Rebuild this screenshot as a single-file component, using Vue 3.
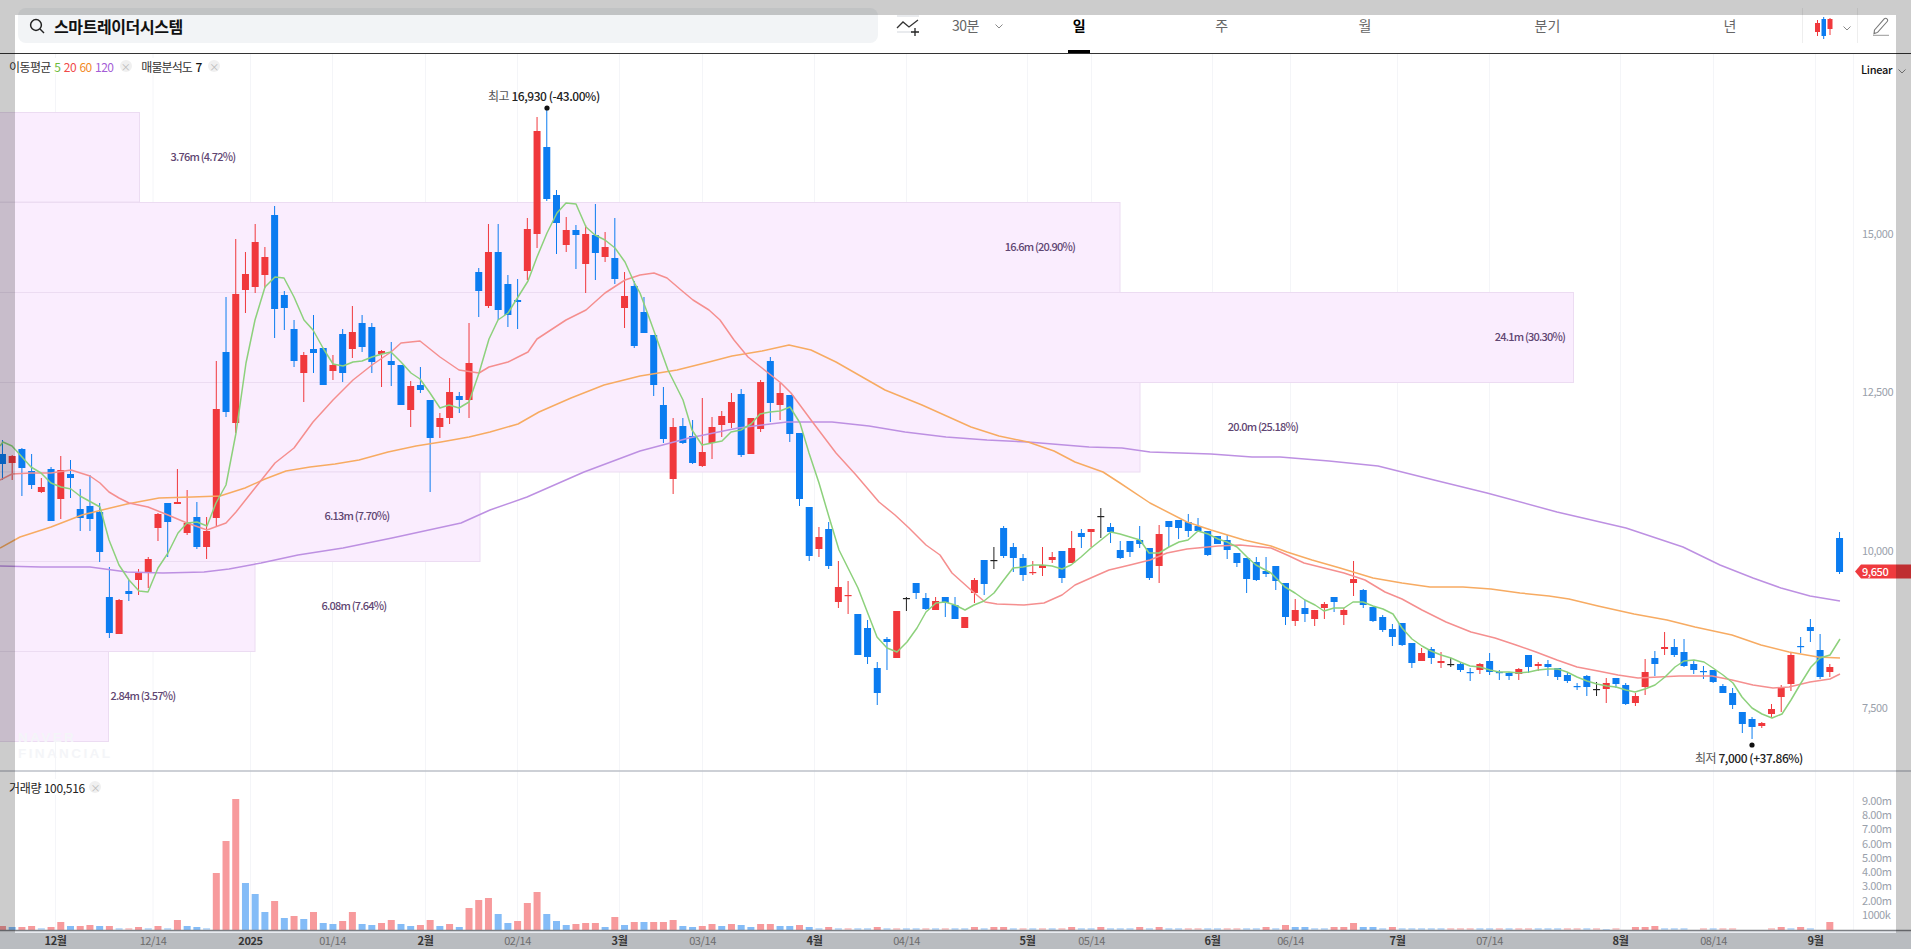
<template>
  <div class="page">
    <header class="header">
      <div class="search">
        <svg class="search-icon" width="16" height="16" viewBox="0 0 16 16">
          <circle cx="7" cy="7" r="5.4" fill="none" stroke="#222" stroke-width="1.5" />
          <path d="M11 11l4 4" stroke="#222" stroke-width="1.5" fill="none" />
        </svg>
        <span class="search-name">스마트레이더시스템</span>
      </div>
      <div class="line-tool">
        <svg width="24" height="22" viewBox="0 0 24 22">
          <path d="M1 1h22M1 17h15" stroke="#d3d7de" stroke-width="1.2" fill="none" />
          <path d="M1 13l6-6 6 5 9-7" stroke="#333" stroke-width="1.3" fill="none" />
          <path d="M15 17h8M19 13v8" stroke="#222" stroke-width="1.3" fill="none" />
        </svg>
      </div>
      <div class="interval">
        <span>30분</span>
        <svg class="chev" width="8" height="5" viewBox="0 0 8 5"><path d="M.5.5L4 4 7.5.5" /></svg>
      </div>
      <nav class="tabs">
        <a
          v-for="t in tabs"
          :key="t.label"
          class="tab"
          :class="{ active: t.active }"
          :style="{ width: t.w + 'px' }"
        >{{ t.label }}</a>
      </nav>
      <div class="type-cell">
        <svg width="20" height="22" viewBox="0 0 20 22">
          <path d="M3.5 3v16M16 1v17" stroke="#f0383c" fill="none" />
          <rect x="1" y="6" width="5" height="9" fill="#f0383c" />
          <rect x="13.5" y="2" width="5" height="10" fill="#f0383c" />
          <path d="M9.7 0v22" stroke="#0b7cf0" fill="none" />
          <rect x="7.5" y="2" width="4.5" height="17" fill="#0b7cf0" />
        </svg>
        <svg class="chev" width="8" height="5" viewBox="0 0 8 5"><path d="M.5.5L4 4 7.5.5" /></svg>
      </div>
      <div class="pencil">
        <svg width="17" height="19" viewBox="0 0 17 19">
          <path d="M1.5 13l9.7-11.2a1.9 1.9 0 0 1 2.8 0 1.9 1.9 0 0 1 .2 2.7L4.6 15.4 1 16.6z" fill="none" stroke="#777" stroke-width="1.1" />
          <path d="M0 18.3h16" stroke="#999" stroke-width="1" />
        </svg>
      </div>
    </header>

    <section class="chart">
      <svg class="plot" width="1911" height="895" viewBox="0 54 1911 895">
        <rect x="0" y="931" width="1911" height="18" fill="#e8ebf0" />

        <line v-for="g in gridX" :key="g" :x1="g" :x2="g" y1="54" y2="931" class="grid" />
        <line x1="1853.5" x2="1853.5" y1="54" y2="931" class="grid" />

        <g v-for="b in bands" :key="b.y">
          <rect :x="-2" :y="b.y" :width="b.w + 2" :height="b.h" class="band" />
          <text :x="b.tx" :y="b.ty" class="band-text" text-anchor="middle">{{ b.label }}</text>
        </g>

        <text class="mark"><tspan x="18" y="741.5">NAVER</tspan><tspan x="18" y="757.5">FINANCIAL</tspan></text>

        <rect
          v-for="(v, i) in volumes"
          :key="'v' + i"
          :x="xAt(i) - 3.5"
          :y="930 - Math.abs(v)"
          width="7"
          :height="Math.abs(v)"
          :fill="v > 0 ? '#f79a9c' : '#84bcf7'"
          :opacity="Math.abs(v) <= 2 ? 0.5 : 1"
        />

        <g v-for="(c, i) in candles" :key="'c' + i">
          <line :x1="xAt(i)" :x2="xAt(i)" :y1="c[3]" :y2="c[4]" :stroke="colors[c[0]]" stroke-width="1" />
          <rect
            :x="xAt(i) - 3.5"
            :y="c[1]"
            width="7"
            :height="Math.max(c[2] - c[1], 1.2)"
            :fill="colors[c[0]]"
          />
        </g>

        <polyline :points="ma120" class="ma" stroke="#bd90e2" />
        <polyline :points="ma60" class="ma" stroke="#f7ab62" />
        <polyline :points="ma20" class="ma" stroke="#f58f8f" />
        <polyline :points="ma5" class="ma" stroke="#8dd17c" />

        <circle cx="547" cy="108" r="2.6" fill="#111" />
        <text x="488" y="101" class="peak"><tspan class="peak-name">최고</tspan> 16,930 (-43.00%)</text>
        <circle cx="1752" cy="745" r="2.6" fill="#111" />
        <text x="1695" y="763" class="peak"><tspan class="peak-name">최저</tspan> 7,000 (+37.86%)</text>

        <line x1="0" x2="1911" y1="771" y2="771" stroke="#bcc1c9" stroke-width="1.5" />
        <line x1="0" x2="1911" y1="930.5" y2="930.5" stroke="#7c7f84" stroke-width="1.5" />

        <text v-for="p in priceTicks" :key="p.t" x="1862" :y="p.y" class="tick">{{ p.t }}</text>
        <text v-for="p in volumeTicks" :key="p.t" x="1862" :y="p.y" class="tick">{{ p.t }}</text>

        <path d="M1855 571.5l6-7h50v14h-50z" fill="#ef3a3e" />
        <text x="1862" y="575.5" class="price-tag">9,650</text>

        <text
          v-for="d in dates"
          :key="d.t"
          :x="d.x"
          y="945"
          text-anchor="middle"
          class="date"
          :class="{ major: d.major }"
        >{{ d.t }}</text>
      </svg>

      <div class="legend top">
        <span>이동평균</span>
        <span class="ma5">5</span>
        <span class="ma20">20</span>
        <span class="ma60">60</span>
        <span class="ma120">120</span>
        <i class="chip">×</i>
        <span class="next">매물분석도</span>
        <b>7</b>
        <i class="chip">×</i>
      </div>
      <div class="legend volume">
        <span>거래량</span>
        <span>100,516</span>
        <i class="chip">×</i>
      </div>
      <div class="scale">
        <span>Linear</span>
        <svg class="chev" width="8" height="5" viewBox="0 0 8 5"><path d="M.5.5L4 4 7.5.5" /></svg>
      </div>
    </section>

    <div class="dim"></div>
  </div>
</template>

<script setup>
const tabs = [
  { label: '일', w: 142.5, active: true },
  { label: '주', w: 142.5 },
  { label: '월', w: 144 },
  { label: '분기', w: 221 },
  { label: '년', w: 144 },
]

const colors = { r: '#f0383c', b: '#0b7cf0', k: '#222' }

function xAt(i) {
  return 2.46 + 9.72 * i
}

const gridX = [55.5, 153, 250.5, 332.5, 425.5, 517.5, 619.5, 702.5, 814.5, 906.5, 1027.5, 1091.5, 1212.5, 1290.5, 1397.5, 1489.5, 1620.5, 1713.5, 1815.5]

const dates = [
  { t: '12월', x: 55.5, major: true }, { t: '12/14', x: 153 }, { t: '2025', x: 250.5, major: true },
  { t: '01/14', x: 332.5 }, { t: '2월', x: 425.5, major: true }, { t: '02/14', x: 517.5 },
  { t: '3월', x: 619.5, major: true }, { t: '03/14', x: 702.5 }, { t: '4월', x: 814.5, major: true },
  { t: '04/14', x: 906.5 }, { t: '5월', x: 1027.5, major: true }, { t: '05/14', x: 1091.5 },
  { t: '6월', x: 1212.5, major: true }, { t: '06/14', x: 1290.5 }, { t: '7월', x: 1397.5, major: true },
  { t: '07/14', x: 1489.5 }, { t: '8월', x: 1620.5, major: true }, { t: '08/14', x: 1713.5 },
  { t: '9월', x: 1815.5, major: true },
]

const bands = [
  { y: 112.5, h: 89.5, w: 139.5, tx: 203, ty: 161, label: '3.76m (4.72%)' },
  { y: 202.5, h: 90, w: 1120, tx: 1040, ty: 251, label: '16.6m (20.90%)' },
  { y: 292.5, h: 90, w: 1573.5, tx: 1530, ty: 341, label: '24.1m (30.30%)' },
  { y: 382.5, h: 89.5, w: 1140, tx: 1263, ty: 431, label: '20.0m (25.18%)' },
  { y: 472, h: 89.5, w: 480, tx: 357, ty: 520, label: '6.13m (7.70%)' },
  { y: 561.5, h: 90, w: 255, tx: 354, ty: 610, label: '6.08m (7.64%)' },
  { y: 651.5, h: 90, w: 108.5, tx: 143, ty: 700, label: '2.84m (3.57%)' },
]

const priceTicks = [
  { t: '15,000', y: 238 },
  { t: '12,500', y: 396 },
  { t: '10,000', y: 554.5 },
  { t: '7,500', y: 712 },
]

const volumeTicks = [
  { t: '9.00m', y: 804.5 }, { t: '8.00m', y: 818.5 }, { t: '7.00m', y: 833 },
  { t: '6.00m', y: 847.5 }, { t: '5.00m', y: 862 }, { t: '4.00m', y: 876 },
  { t: '3.00m', y: 890 }, { t: '2.00m', y: 905 }, { t: '1000k', y: 918.5 },
]

// kind, body top, body bottom, wick top, wick bottom
const candles = [
  ['b',454,464,440,480],['r',456,463,455,480],['b',449,468,448,496],['b',471,485,454,489],['r',487,492,478,493],
  ['b',469,521,467,521],['r',470,499,456,519],['b',474,478,460,498],['b',509,518,489,531],['b',506,519,475,531],
  ['b',512,552,503,562],['b',597,633,567,638],['r',600,634,599,634],['b',591,594,580,601],['r',572,580,569,595],
  ['r',559,573,557,588],['r',514,528,513,541],['b',503,522,503,557],['r',502,504,469,504],['r',523,533,490,535],
  ['b',517,547,502,549],['r',531,547,517,559],['r',409,518,361,527],['b',352,412,297,417],['r',294,423,239,433],
  ['r',274,290,252,313],['r',242,287,224,293],['r',257,275,247,288],['b',215,309,206,338],['b',295,308,291,330],
  ['b',329,361,320,367],['r',355,373,352,402],['b',349,353,315,373],['b',348,385,348,385],['r',365,371,355,380],
  ['b',334,373,329,382],['r',332,349,306,358],['b',323,347,315,352],['b',327,362,323,373],['r',351,354,350,387],
  ['b',361,365,342,386],['b',365,405,365,405],['r',386,410,381,427],['b',385,390,367,393],['b',400,438,400,492],
  ['r',418,427,413,438],['r',392,418,378,424],['b',396,400,392,413],['r',363,400,323,418],['b',272,291,268,317],
  ['r',252,306,224,308],['b',252,310,224,320],['b',284,315,275,327],['b',300,302,279,329],['r',229,271,218,280],
  ['r',131,234,117,248],['b',147,199,108,201],['b',195,223,190,254],['r',230,245,217,252],['b',230,235,225,269],
  ['r',234,264,225,293],['b',235,253,204,280],['r',247,257,232,262],['b',258,279,218,284],['r',296,308,272,328],
  ['b',286,346,281,348],['b',312,333,297,333],['b',335,385,335,396],['b',405,439,387,443],['r',427,479,418,494],
  ['b',426,443,418,444],['b',436,463,420,464],['r',452,466,398,467],['r',427,443,417,459],['r',416,425,411,437],
  ['r',402,423,393,428],['b',394,455,389,457],['r',418,454,418,454],['r',382,429,380,432],['b',361,403,357,422],
  ['r',393,405,383,420],['b',395,434,395,442],['b',433,499,433,506],['b',507,556,507,561],['r',537,549,527,557],
  ['b',529,566,522,569],['r',587,602,561,608],['r',595,596,581,614],['b',614,655,614,655],['b',628,657,620,664],
  ['b',668,693,662,705],['b',639,642,637,670],['r',611,658,611,658],['k',598,598,597,611],['b',583,593,583,599],
  ['b',598,609,593,610],['r',601,610,597,610],['b',597,603,597,617],['b',605,619,597,619],['r',617,628,617,628],
  ['r',580,593,578,603],['b',560,584,560,595],['k',560,560,547,569],['b',528,556,526,558],['b',547,558,543,572],
  ['b',558,575,554,581],['r',572,573,561,575],['r',565,568,547,576],['r',557,560,552,563],['b',551,578,551,583],
  ['r',548,563,531,563],['b',533,537,529,548],['r',529,532,529,547],['k',516,516,508,538],['b',527,532,523,543],
  ['b',550,558,541,559],['b',541,552,541,557],['b',540,544,526,548],['b',548,578,548,580],['r',534,566,525,583],
  ['b',521,527,521,547],['b',520,528,520,539],['b',522,531,514,537],['b',526,531,518,531],['b',531,555,531,556],
  ['b',536,544,536,544],['b',540,550,535,559],['b',553,563,553,567],['b',558,579,558,593],['b',562,580,557,581],
  ['b',571,574,557,577],['b',566,581,566,590],['b',583,617,583,625],['r',610,621,599,626],['b',608,614,600,622],
  ['r',610,619,610,626],['r',604,608,602,619],['b',597,602,597,612],['r',610,615,608,625],['r',579,583,561,596],
  ['b',590,605,589,608],['b',607,621,607,622],['b',617,630,615,632],['b',629,637,624,646],['b',623,645,623,646],
  ['b',643,663,643,668],['r',653,661,648,661],['b',649,658,647,664],['r',661,663,652,668],['k',664,664,658,667],
  ['b',664,670,662,672],['b',672,672,668,681],['r',664,670,663,674],['b',661,672,653,675],['b',672,673,670,680],
  ['b',673,676,672,680],['r',669,674,668,680],['b',655,667,655,673],['r',664,666,662,671],['b',664,667,660,676],
  ['b',668,677,668,680],['b',675,681,673,683],['b',686,686,683,690],['b',676,687,675,696],['k',689,689,682,696],
  ['r',683,689,678,703],['b',678,684,678,688],['b',685,704,683,705],['r',696,703,693,706],['r',672,687,659,695],
  ['b',658,664,651,676],['r',647,649,632,655],['b',647,655,639,657],['b',652,666,639,667],['b',664,670,660,674],
  ['b',671,671,666,679],['b',670,682,670,683],['b',686,693,684,693],['b',693,705,688,709],['b',712,724,712,733],
  ['b',719,727,717,739],['r',723,726,722,728],['r',709,714,704,717],['r',688,697,685,712],['r',655,684,653,691],
  ['b',646,646,637,653],['b',627,631,619,642],['b',650,677,634,679],['r',667,672,664,677],['b',538,572,532,574],
]

// positive = up day bar, negative = down day bar
const volumes = [
  4,-3,3,4,-2,3,8,-4,4,5,-4,4,-2,2,3,-2,4,-2,10,-4,-3,-2,57,89,131,-47,-36,-18,29,-12,14,-11,18,-7,-6,9,18,-6,-5,7,10,-6,-4,5,10,-4,6,-3,22,30,
  32,-16,-7,9,27,38,-16,-9,-5,6,7,7,-3,13,-5,8,-8,8,8,10,-4,-3,4,6,-4,6,-5,-3,6,6,-4,-4,5,-3,-2,3,-2,2,-2,-2,3,-2,2,-2,-2,2,-2,2,-2,-2,
  3,-2,3,3,-2,2,-2,2,-2,2,3,-2,-2,3,-2,-2,-2,3,-2,3,-2,-2,2,2,-2,-2,2,2,-2,-2,3,-2,5,-3,-3,-2,-2,3,3,7,-3,-3,-2,3,-2,-2,-2,-2,-2,2,
  2,2,-2,-2,2,-2,2,2,-2,-2,-2,2,2,-2,2,-1,2,0,3,3,4,-2,-2,-2,0,2,-2,2,2,0,0,0,2,3,-2,3,-2,0,8,
]

const ma5 = '0,446 3,442 12,446 22,457 31,467 41,473 51,483 61,487 71,489 80,496 100,507 109,540 119,565 129,580 139,591 148,592 158,568 168,553 178,533 187,523 197,522 207,526 216,503 226,485 236,433 246,363 255,320 265,287 275,277 284,278 294,297 304,320 313,330 323,348 333,364 343,366 353,362 362,361 372,357 382,354 391,352 401,362 411,373 420,379 430,393 440,408 449,405 459,408 469,402 479,373 489,339 498,320 508,313 518,297 528,281 537,257 547,233 557,213 566,203 576,204 586,227 595,235 605,240 615,248 625,262 634,282 640,293 650,320 668,370 683,400 692,430 702,445 712,443 722,441 731,432 741,430 751,424 760,414 770,412 780,411 790,407 800,423 809,453 819,483 829,517 839,550 858,588 877,637 887,648 897,652 907,642 917,628 926,612 936,603 945,602 955,605 965,610 974,605 984,601 994,593 1003,581 1013,568 1023,567 1033,565 1042,565 1052,566 1062,569 1071,565 1081,557 1091,548 1101,540 1111,532 1120,534 1130,537 1140,540 1149,553 1159,553 1169,547 1179,542 1188,540 1198,531 1208,534 1218,539 1227,542 1237,547 1247,557 1256,565 1271,573 1285,587 1295,593 1305,600 1315,605 1324,611 1334,608 1344,608 1353,602 1363,602 1373,606 1383,609 1393,614 1402,628 1412,639 1422,646 1431,651 1441,655 1451,658 1460,662 1470,666 1480,667 1490,670 1499,672 1509,672 1519,673 1529,672 1538,670 1548,669 1558,669 1567,672 1577,677 1587,681 1597,684 1607,686 1616,687 1626,690 1635,692 1645,689 1655,685 1665,677 1675,667 1684,661 1694,660 1704,662 1713,668 1723,675 1733,683 1742,697 1752,708 1762,714 1772,718 1782,714 1791,700 1801,683 1811,667 1820,658 1830,655 1840,639'

const ma20 = '0,480 12,474 31,473 51,473 71,470 90,476 100,483 109,492 119,498 129,503 148,507 168,515 187,523 207,530 226,523 236,512 255,488 275,463 294,448 313,422 333,400 353,380 372,365 391,352 401,343 420,341 440,357 459,370 479,373 489,367 508,362 518,357 528,352 537,339 566,320 586,310 605,293 625,280 640,275 654,273 667,278 681,290 693,300 709,310 720,320 734,340 748,357 762,368 781,383 791,393 811,420 836,453 856,475 879,502 895,515 909,528 926,545 940,555 952,573 971,590 985,602 997,604 1024,605 1044,603 1062,595 1075,585 1093,577 1109,570 1130,565 1150,560 1167,553 1187,549 1218,546 1240,545 1271,548 1287,555 1304,563 1324,568 1344,573 1365,580 1385,592 1402,599 1422,610 1446,622 1471,632 1495,638 1516,645 1536,652 1557,660 1577,667 1598,671 1618,675 1638,678 1659,677 1679,676 1712,676 1732,680 1753,685 1773,688 1789,687 1810,682 1830,679 1840,674'

const ma60 = '0,548 20,537 51,527 82,515 102,510 127,504 159,498 192,497 220,496 245,488 265,479 286,471 310,467 335,464 359,460 388,452 416,446 441,442 469,437 490,432 518,424 539,412 571,398 604,385 640,376 677,370 709,362 732,356 762,351 789,345 811,350 836,362 864,378 885,390 922,405 971,427 999,436 1028,442 1054,451 1075,462 1103,472 1120,483 1150,503 1187,522 1211,530 1244,540 1271,546 1287,552 1312,560 1340,568 1373,578 1402,583 1430,587 1463,587 1491,589 1520,593 1549,596 1569,599 1598,606 1634,614 1667,620 1695,627 1732,635 1761,645 1789,652 1818,657 1840,658'

const ma120 = '0,566 41,567 90,567 127,572 163,573 204,572 229,569 261,563 298,555 343,548 392,538 461,523 490,510 527,497 584,472 640,451 689,438 738,428 787,422 832,422 869,426 905,432 946,437 987,440 1028,442 1089,447 1122,448 1150,452 1211,454 1252,457 1280,457 1329,461 1378,466 1434,480 1487,493 1557,512 1626,528 1683,547 1720,565 1753,578 1781,588 1810,596 1840,601'
</script>

<style scoped>
.page {
  position: relative;
  width: 1911px;
  height: 949px;
  overflow: hidden;
  background: #fff;
  font-family: "Noto Sans CJK KR", "Noto Sans", sans-serif;
}

.header {
  display: flex;
  height: 53px;
  box-sizing: content-box;
  border-bottom: 1.5px solid #333;
  padding-left: 18px;
}

.search {
  display: flex;
  align-items: center;
  width: 860px;
  height: 35px;
  margin-top: 8px;
  background: #f2f4f6;
  border-radius: 8px;
  box-sizing: border-box;
  padding-left: 11px;
}

.search-name {
  margin-left: 9px;
  font-size: 16px;
  font-weight: 700;
  letter-spacing: -0.4px;
  color: #111;
}

.line-tool {
  width: 40px;
  margin-left: 18px;
  padding-top: 15px;
}

.line-tool svg,
.pencil svg {
  display: block;
}

.interval {
  display: flex;
  align-items: center;
  width: 72px;
  height: 50px;
  font-size: 14px;
  letter-spacing: -0.5px;
  color: #666;
}

.interval span {
  width: 59px;
  text-align: center;
}

.chev {
  fill: none;
  stroke: #888;
  stroke-width: 1;
}

.interval .chev {
  margin-top: 3px;
}

.tabs {
  display: flex;
}

.tab {
  position: relative;
  display: flex;
  align-items: center;
  justify-content: center;
  height: 50px;
  font-size: 14px;
  color: #666;
}

.tab.active {
  font-weight: 700;
  color: #000;
}

.tab.active::after {
  content: '';
  position: absolute;
  left: 60px;
  width: 22px;
  bottom: -3px;
  height: 3px;
  background: #000;
}

.type-cell {
  display: flex;
  align-items: center;
  gap: 9px;
  width: 56px;
  height: 35px;
  margin-top: 8px;
  padding: 5px 0 0 11px;
  box-sizing: border-box;
  border-left: 1px solid #eee;
  border-right: 1px solid #eee;
}

.pencil {
  padding: 17px 0 0 15px;
}

.chart {
  position: relative;
}

.plot {
  display: block;
}

.grid {
  stroke: #f4f5f8;
  stroke-width: 1;
}

.band {
  fill: #faedfe;
  stroke: #ecdcf2;
  stroke-width: 1;
}

.band-text {
  font-size: 11px;
  font-weight: 500;
  letter-spacing: -0.8px;
  fill: #5f4672;
}

.mark {
  font-family: "Liberation Sans", sans-serif;
  font-size: 13.5px;
  font-weight: 700;
  letter-spacing: 2.4px;
  fill: #f4f5f8;
}

.ma {
  fill: none;
  stroke-width: 1.5;
  stroke-linejoin: round;
}

.peak {
  font-size: 12px;
  font-weight: 500;
  letter-spacing: -0.45px;
  fill: #222;
}

.peak-name {
  font-weight: 400;
  fill: #555;
}

.tick {
  font-size: 11px;
  letter-spacing: -0.4px;
  fill: #9aa1ab;
}

.price-tag {
  font-size: 11px;
  font-weight: 500;
  letter-spacing: -0.4px;
  fill: #fff;
}

.date {
  font-size: 11px;
  letter-spacing: -0.4px;
  fill: #888;
}

.date.major {
  font-weight: 700;
  fill: #444;
}

.legend {
  position: absolute;
  left: 9px;
  display: flex;
  align-items: center;
  gap: 3.5px;
  height: 16px;
  background: #fff;
  font-size: 12px;
  letter-spacing: -0.6px;
  color: #333;
}

.legend.top {
  top: 4px;
}

.legend.volume {
  top: 725px;
  gap: 2.5px;
  letter-spacing: -0.3px;
  color: #222;
}

.legend.volume .chip {
  margin-left: 2px;
}

.legend b {
  font-weight: 500;
  color: #111;
}

.next {
  margin-left: 6px;
  letter-spacing: -0.9px;
}

.ma5 { color: #6dbb3a; }
.ma20 { color: #f04a4a; }
.ma60 { color: #f28a1f; }
.ma120 { color: #a45dd6; }

.chip {
  display: flex;
  align-items: center;
  justify-content: center;
  width: 12px;
  height: 12px;
  margin-left: 3px;
  border-radius: 50%;
  background: #f0f0f0;
  font-style: normal;
  font-size: 10px;
  letter-spacing: 0;
  color: #bbb;
}

.scale {
  position: absolute;
  left: 1861px;
  top: 7px;
  display: flex;
  align-items: center;
  gap: 6px;
  font-size: 11px;
  font-weight: 500;
  letter-spacing: -0.3px;
  color: #111;
}

.scale .chev {
  margin-top: 4px;
}

.dim {
  position: absolute;
  inset: 0;
  box-sizing: border-box;
  border-style: solid;
  border-color: rgba(0, 0, 0, 0.2);
  border-width: 15px 15px 16px 15px;
  pointer-events: none;
}
</style>

<style>
html, body {
  margin: 0;
  background: #fff;
}
</style>
